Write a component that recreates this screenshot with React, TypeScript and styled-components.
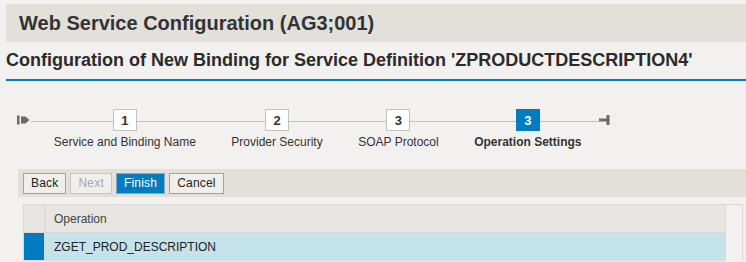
import React from "react";
import styled, { createGlobalStyle } from "styled-components";

const Global = createGlobalStyle`
  html, body { margin: 0; padding: 0; background: #f2f1ef; }
  body { font-family: "Liberation Sans", Arial, sans-serif; color: #333; overflow: hidden; }
`;

const Page = styled.div`
  width: 746px;
  height: 262px;
  padding-top: 4px;
  box-sizing: border-box;
  overflow: hidden;
`;

const TitleBar = styled.div`
  margin-left: 6px;
  height: 38px;
  background: #e1e0db;
  display: flex;
  align-items: center;
  padding-left: 13px;
  font-size: 20px;
  font-weight: bold;
  color: #333;
`;

const SubTitle = styled.div`
  margin-left: 6px;
  height: 37px;
  border-bottom: 2px solid #0a7cc1;
  display: flex;
  align-items: center;
  font-size: 18px;
  font-weight: bold;
  color: #2b2b2b;
`;

const Roadmap = styled.div`
  height: 88px;
  display: flex;
  align-items: flex-start;
  padding-left: 17px;
  padding-top: 28px;
  box-sizing: border-box;
`;

const EdgeIcon = styled.div`
  height: 22px;
  display: flex;
  align-items: center;
`;

const Connector = styled.div<{ $w?: number }>`
  height: 22px;
  display: flex;
  align-items: center;
  width: ${(p) => p.$w ?? 6}px;
  &::after {
    content: "";
    display: block;
    width: 100%;
    height: 1px;
    margin-top: 3px;
    background: #c3c2bf;
  }
`;

const Step = styled.div`
  display: flex;
  flex-direction: column;
  align-items: stretch;
`;

const StepTop = styled.div`
  display: flex;
  align-items: center;
  height: 22px;
`;

const Line = styled.div`
  flex: 1;
  height: 1px;
  margin-top: 3px;
  background: #c3c2bf;
`;

const StepBox = styled.div<{ $active?: boolean }>`
  width: 24px;
  height: 22px;
  box-sizing: border-box;
  display: flex;
  align-items: center;
  justify-content: center;
  font-size: 13px;
  font-weight: bold;
  color: ${(p) => (p.$active ? "#fff" : "#333")};
  background: ${(p) => (p.$active ? "#007cc0" : "#fff")};
  border: 1px solid ${(p) => (p.$active ? "#007cc0" : "#c3c2bf")};
`;

const StepLabel = styled.div<{ $active?: boolean }>`
  padding: 4px 17.75px 0;
  text-align: center;
  white-space: nowrap;
  font-size: 12px;
  font-weight: ${(p) => (p.$active ? "bold" : "normal")};
  color: #333;
`;

const Toolbar = styled.div`
  margin-left: 18px;
  height: 28px;
  background: #e1e0db;
  display: flex;
  align-items: center;
  gap: 4px;
  padding-left: 5px;
`;

const Button = styled.button<{ $variant?: "primary" | "disabled" }>`
  height: 21px;
  box-sizing: border-box;
  padding: 0 7px;
  font-family: "Liberation Sans", Arial, sans-serif;
  font-size: 12px;
  letter-spacing: 0.2px;
  border: 1px solid
    ${(p) =>
      p.$variant === "primary" ? "#8aa6b8" : p.$variant === "disabled" ? "#c6c5c1" : "#a3a29e"};
  background: ${(p) => (p.$variant === "primary" ? "#007cc0" : "#f0efeb")};
  color: ${(p) =>
    p.$variant === "primary" ? "#fff" : p.$variant === "disabled" ? "#a8a8a8" : "#222"};
  cursor: pointer;
`;

const Table = styled.div`
  margin: 7px 0 0 23px;
  width: 720px;
  border: 1px solid #dad9d5;
  border-bottom: none;
  box-sizing: border-box;
  display: grid;
  grid-template-columns: 21px 1fr 17px;
  grid-auto-rows: 28px;
`;

const SelCell = styled.div<{ $selected?: boolean }>`
  background: ${(p) => (p.$selected ? "#007cc0" : "#e6e5e1")};
  border-right: 1px solid #d6d5d1;
  border-bottom: 1px solid #dcdbd7;
`;

const Cell = styled.div<{ $header?: boolean }>`
  display: flex;
  align-items: center;
  padding-left: 9px;
  font-size: 12px;
  color: ${(p) => (p.$header ? "#444" : "#222")};
  background: ${(p) => (p.$header ? "#e6e5e1" : "#c5e3eb")};
  border-bottom: 1px solid ${(p) => (p.$header ? "#d6d5d1" : "#c5e3eb")};
`;

const ScrollCell = styled.div`
  background: #f2f1ef;
  border-left: 1px solid #dad9d5;
`;

const StartIcon = () => (
  <svg width="14" height="10" viewBox="0 0 14 10">
    <rect x="0" y="0.5" width="2.5" height="9" fill="#6a6a6a" />
    <path d="M4 1.5 H8.5 L12.5 5 L8.5 8.5 H4 Z" fill="#6a6a6a" />
  </svg>
);

const EndIcon = () => (
  <svg width="11" height="11" viewBox="0 0 11 11">
    <rect x="0" y="3.5" width="8" height="3" fill="#6a6a6a" />
    <rect x="7.5" y="0" width="3" height="10" fill="#6a6a6a" />
  </svg>
);

const steps = [
  { n: "1", label: "Service and Binding Name" },
  { n: "2", label: "Provider Security" },
  { n: "3", label: "SOAP Protocol" },
  { n: "3", label: "Operation Settings", active: true },
];

export default function App() {
  return (
    <>
      <Global />
      <Page>
        <TitleBar>Web Service Configuration (AG3;001)</TitleBar>
        <SubTitle>Configuration of New Binding for Service Definition 'ZPRODUCTDESCRIPTION4'</SubTitle>
        <Roadmap>
          <EdgeIcon>
            <StartIcon />
          </EdgeIcon>
          <Connector $w={5} />
          {steps.map((s, i) => (
            <Step key={i}>
              <StepTop>
                <Line />
                <StepBox $active={s.active}>{s.n}</StepBox>
                <Line />
              </StepTop>
              <StepLabel $active={s.active}>{s.label}</StepLabel>
            </Step>
          ))}
          <EdgeIcon>
            <EndIcon />
          </EdgeIcon>
        </Roadmap>
        <Toolbar>
          <Button>Back</Button>
          <Button $variant="disabled">Next</Button>
          <Button $variant="primary">Finish</Button>
          <Button>Cancel</Button>
        </Toolbar>
        <Table>
          <SelCell />
          <Cell $header>Operation</Cell>
          <ScrollCell />
          <SelCell $selected />
          <Cell>ZGET_PROD_DESCRIPTION</Cell>
          <ScrollCell />
        </Table>
      </Page>
    </>
  );
}
